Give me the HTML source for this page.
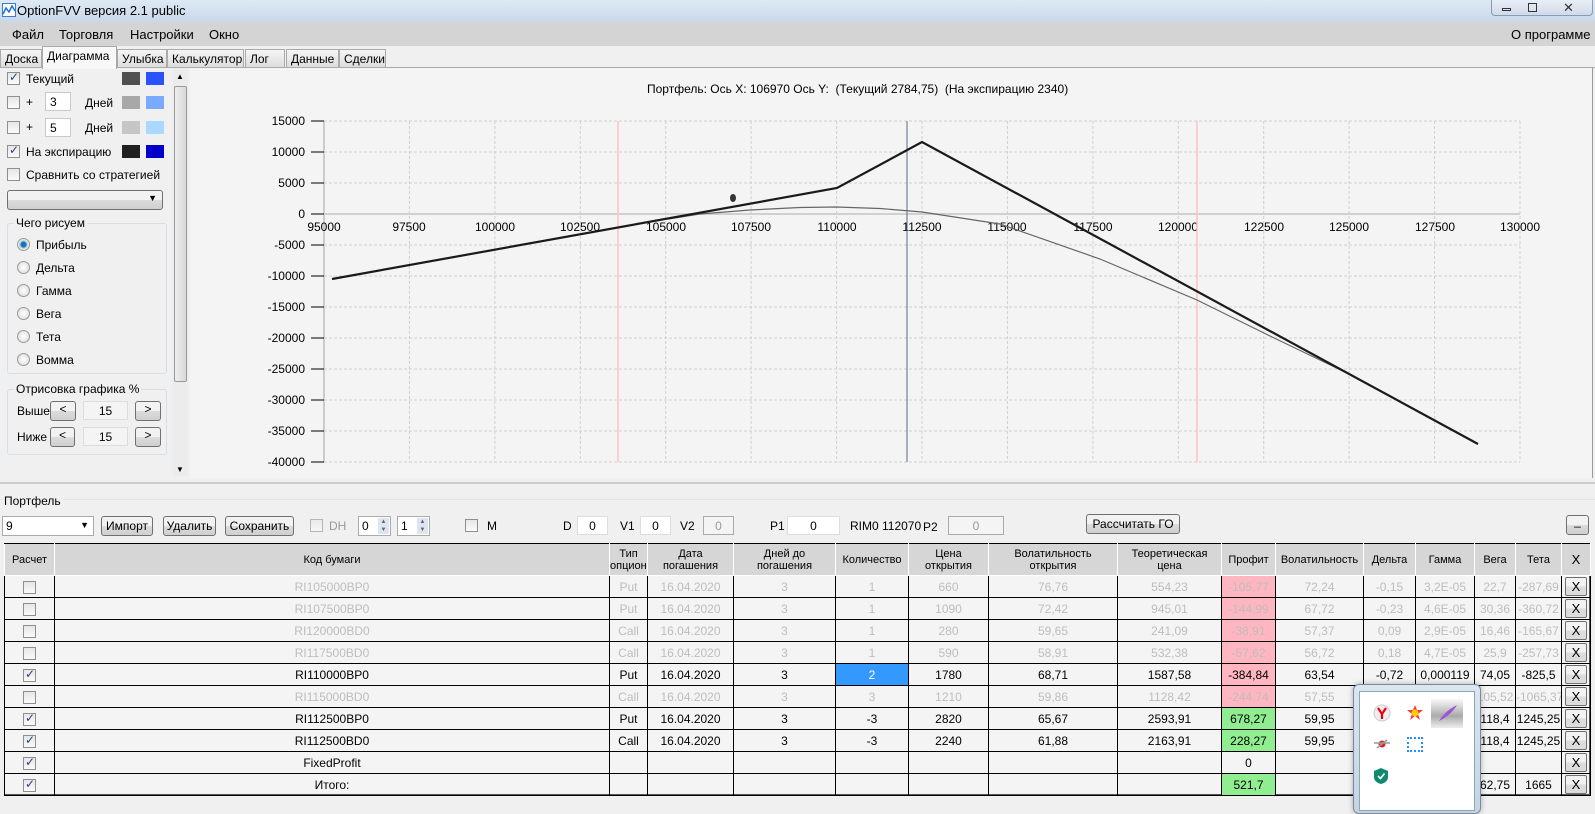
<!DOCTYPE html>
<html><head><meta charset="utf-8"><style>
*{box-sizing:border-box;margin:0;padding:0}
body{width:1595px;height:802px;overflow:hidden;background:#f0f0f0;font-family:"Liberation Sans",sans-serif;font-size:12px;color:#000;position:relative}
.a{position:absolute}
.cb{position:absolute;width:13px;height:13px;border:1px solid #8e8f8f;background:linear-gradient(#e6e6e6,#fafafa)}
.cb.on::after{content:"✓";position:absolute;left:1px;top:-3px;font-size:12px;color:#2a3f8a}
.rd{position:absolute;width:13px;height:13px;border-radius:50%;border:1px solid #9a9a9a;background:radial-gradient(#fff,#d8d8d8)}
.rd.on{background:radial-gradient(#1a6fc0 30%,#9cc 45%,#e8e8e8 60%)}
.btn{position:absolute;border:1px solid #707070;border-radius:3px;background:linear-gradient(#f2f2f2 50%,#dcdcdc 50%,#cfcfcf);text-align:center;font-size:12px}
.tb{position:absolute;border:1px solid #c8c8c8;background:#fff;text-align:center}
.tab{position:absolute;top:49px;height:19px;border:1px solid #aaa;border-bottom:none;background:linear-gradient(#f5f5f5,#dcdcdc);font-size:12px;padding:2px 4px}
table{position:absolute;left:4px;top:543px;width:1586px;border-collapse:collapse;table-layout:fixed;font-size:12px}
td{border:1px solid #000;height:22px;text-align:center;white-space:nowrap;overflow:hidden;padding:0}
th{background:#d6d6d6;border:1px solid #fff;border-top:1px solid #000;font-weight:normal;font-size:11px;height:32px;line-height:12px;padding:0;overflow:hidden;white-space:nowrap}
tr.g td{color:#bdbdbd}
.pk{background:#ffb6c1}.gr{background:#90ee90}
.x{display:inline-block;width:22px;height:19px;border:1px solid #707070;border-radius:2px;background:linear-gradient(#f2f2f2 50%,#dcdcdc 50%);font-size:13px;line-height:17px;vertical-align:middle}
.ycb{display:inline-block;width:13px;height:13px;border:1px solid #8e8f8f;background:linear-gradient(#e6e6e6,#fafafa);vertical-align:middle;position:relative}
.ycb.on::after{content:"✓";position:absolute;left:1px;top:-3px;font-size:12px;color:#2a3f8a}
</style></head><body>
<div class="a" style="left:0;top:0;width:1595px;height:22px;background:linear-gradient(#dfe9f5,#c9d8ea)"></div>
<svg class="a" style="left:2px;top:3px" width="14" height="14"><rect x=".5" y=".5" width="13" height="13" fill="#fff" stroke="#3a7bd5"/><path d="M1 11 L4 5 L7 9 L10 3 L13 8" stroke="#1e6fd9" fill="none" stroke-width="1.5"/></svg>
<div class="a" style="left:17px;top:3px;font-size:13px">OptionFVV версия 2.1 public</div>
<div class="a" style="left:1491px;top:0;width:102px;height:16px;border:1px solid #8a9bb5;border-top:none;border-radius:0 0 4px 4px;background:linear-gradient(#e8eef7,#d0dbe9)"></div>
<div class="a" style="left:1502px;top:8px;width:9px;height:3px;border:1px solid #333"></div>
<div class="a" style="left:1528px;top:3px;width:9px;height:9px;border:1px solid #333"></div>
<div class="a" style="left:1563px;top:0;font-size:13px;color:#333">✕</div>
<div class="a" style="left:0;top:22px;width:1595px;height:24px;background:#d4d4d4"></div>
<div class="a" style="left:12px;top:27px;font-size:13px">Файл</div>
<div class="a" style="left:59px;top:27px;font-size:13px">Торговля</div>
<div class="a" style="left:130px;top:27px;font-size:13px">Настройки</div>
<div class="a" style="left:209px;top:27px;font-size:13px">Окно</div>
<div class="a" style="left:1511px;top:27px;font-size:13px">О программе</div>
<div class="tab" style="left:0;width:42px">Доска</div>
<div class="tab" style="left:42px;top:46px;height:23px;width:75px;background:#f8f8f8;z-index:2">Диаграмма</div>
<div class="tab" style="left:117px;width:50px">Улыбка</div>
<div class="tab" style="left:167px;width:77px">Калькулятор</div>
<div class="tab" style="left:245px;width:40px">Лог</div>
<div class="tab" style="left:286px;width:53px">Данные</div>
<div class="tab" style="left:339px;width:47px">Сделки</div>
<div class="a" style="left:0;top:67px;width:1595px;height:1px;background:#aaa"></div>
<div class="cb on" style="left:7px;top:72px"></div><div class="a" style="left:26px;top:72px">Текущий</div>
<div class="a" style="left:122px;top:72px;width:18px;height:13px;background:#505050"></div><div class="a" style="left:146px;top:72px;width:18px;height:13px;background:#2a52ff"></div>
<div class="cb" style="left:7px;top:96px"></div><div class="a" style="left:26px;top:95px">+</div>
<div class="tb" style="left:45px;top:92px;width:26px;height:19px;text-align:left;padding:2px 4px">3</div><div class="a" style="left:85px;top:96px">Дней</div>
<div class="a" style="left:122px;top:96px;width:18px;height:13px;background:#a8a8a8"></div><div class="a" style="left:146px;top:96px;width:18px;height:13px;background:#7aaaff"></div>
<div class="cb" style="left:7px;top:121px"></div><div class="a" style="left:26px;top:120px">+</div>
<div class="tb" style="left:45px;top:118px;width:26px;height:19px;text-align:left;padding:2px 4px">5</div><div class="a" style="left:85px;top:121px">Дней</div>
<div class="a" style="left:122px;top:121px;width:18px;height:13px;background:#c6c6c6"></div><div class="a" style="left:146px;top:121px;width:18px;height:13px;background:#aad8ff"></div>
<div class="cb on" style="left:7px;top:145px"></div><div class="a" style="left:26px;top:145px">На экспирацию</div>
<div class="a" style="left:122px;top:145px;width:18px;height:13px;background:#202020"></div><div class="a" style="left:146px;top:145px;width:18px;height:13px;background:#0000c8"></div>
<div class="cb" style="left:7px;top:168px"></div><div class="a" style="left:26px;top:168px">Сравнить со стратегией</div>
<div class="btn" style="left:7px;top:190px;width:156px;height:20px"><span style="position:absolute;right:5px;top:2px;font-size:9px">▼</span></div>
<div class="a" style="left:7px;top:223px;width:160px;height:151px;border:1px solid #d5dfe5;border-radius:3px"></div>
<div class="a" style="left:14px;top:216px;background:#f0f0f0;padding:0 2px">Чего рисуем</div>
<div class="rd on" style="left:17px;top:238px"></div><div class="a" style="left:36px;top:238px">Прибыль</div>
<div class="rd" style="left:17px;top:261px"></div><div class="a" style="left:36px;top:261px">Дельта</div>
<div class="rd" style="left:17px;top:284px"></div><div class="a" style="left:36px;top:284px">Гамма</div>
<div class="rd" style="left:17px;top:307px"></div><div class="a" style="left:36px;top:307px">Вега</div>
<div class="rd" style="left:17px;top:330px"></div><div class="a" style="left:36px;top:330px">Тета</div>
<div class="rd" style="left:17px;top:353px"></div><div class="a" style="left:36px;top:353px">Вомма</div>
<div class="a" style="left:7px;top:389px;width:160px;height:66px;border:1px solid #d5dfe5;border-radius:3px"></div>
<div class="a" style="left:14px;top:382px;background:#f0f0f0;padding:0 2px">Отрисовка графика %</div>
<div class="a" style="left:17px;top:404px">Выше</div>
<div class="btn" style="left:50px;top:401px;width:26px;height:20px">&lt;</div>
<div class="tb" style="left:83px;top:401px;width:45px;height:19px;background:#f4f4f4;border-color:#ddd;padding-top:2px">15</div>
<div class="btn" style="left:135px;top:401px;width:26px;height:20px">&gt;</div>
<div class="a" style="left:17px;top:430px">Ниже</div>
<div class="btn" style="left:50px;top:427px;width:25px;height:20px">&lt;</div>
<div class="tb" style="left:83px;top:427px;width:45px;height:19px;background:#f4f4f4;border-color:#ddd;padding-top:2px">15</div>
<div class="btn" style="left:135px;top:427px;width:26px;height:20px">&gt;</div>
<div class="a" style="left:173px;top:68px;width:15px;height:408px;background:#ececec"></div>
<div class="a" style="left:176px;top:72px;font-size:8px">▲</div>
<div class="a" style="left:174px;top:86px;width:13px;height:296px;border:1px solid #999;border-radius:2px;background:linear-gradient(90deg,#eee,#d8d8d8)"></div>
<div class="a" style="left:176px;top:465px;font-size:8px">▼</div>
<div class="a" style="left:190px;top:68px;width:1403px;height:410px;background:#f4f4f4;border-right:1px solid #999"></div>
<div class="a" style="left:647px;top:82px;font-size:12px">Портфель: Ось X: 106970 Ось Y: &nbsp;(Текущий 2784,75) &nbsp;(На экспирацию 2340)</div>
<svg class="a" style="left:0;top:0" width="1595" height="480" font-family="Liberation Sans" font-size="12">
<g stroke="#cfcfcf" stroke-dasharray="3,2">
<line x1="324" y1="121" x2="1520" y2="121"/><line x1="324" y1="152" x2="1520" y2="152"/><line x1="324" y1="183" x2="1520" y2="183"/>
<line x1="324" y1="245" x2="1520" y2="245"/><line x1="324" y1="276" x2="1520" y2="276"/><line x1="324" y1="307" x2="1520" y2="307"/><line x1="324" y1="338" x2="1520" y2="338"/><line x1="324" y1="369" x2="1520" y2="369"/><line x1="324" y1="400" x2="1520" y2="400"/><line x1="324" y1="431" x2="1520" y2="431"/><line x1="324" y1="462" x2="1520" y2="462"/>
<line x1="409.4" y1="121" x2="409.4" y2="462"/><line x1="494.9" y1="121" x2="494.9" y2="462"/><line x1="580.3" y1="121" x2="580.3" y2="462"/><line x1="665.7" y1="121" x2="665.7" y2="462"/><line x1="751.1" y1="121" x2="751.1" y2="462"/><line x1="836.6" y1="121" x2="836.6" y2="462"/><line x1="922" y1="121" x2="922" y2="462"/><line x1="1007.4" y1="121" x2="1007.4" y2="462"/><line x1="1092.9" y1="121" x2="1092.9" y2="462"/><line x1="1178.3" y1="121" x2="1178.3" y2="462"/><line x1="1263.7" y1="121" x2="1263.7" y2="462"/><line x1="1349.1" y1="121" x2="1349.1" y2="462"/><line x1="1434.6" y1="121" x2="1434.6" y2="462"/><line x1="1520" y1="121" x2="1520" y2="462"/>
</g>
<line x1="324" y1="121" x2="324" y2="462" stroke="#ccc" stroke-width="2"/>
<line x1="324" y1="214" x2="1520" y2="214" stroke="#d0d0d0" stroke-width="2"/>
<g stroke="#000"><line x1="311" y1="121" x2="324" y2="121"/><line x1="311" y1="152" x2="324" y2="152"/><line x1="311" y1="183" x2="324" y2="183"/><line x1="311" y1="214" x2="324" y2="214"/><line x1="311" y1="245" x2="324" y2="245"/><line x1="311" y1="276" x2="324" y2="276"/><line x1="311" y1="307" x2="324" y2="307"/><line x1="311" y1="338" x2="324" y2="338"/><line x1="311" y1="369" x2="324" y2="369"/><line x1="311" y1="400" x2="324" y2="400"/><line x1="311" y1="431" x2="324" y2="431"/><line x1="311" y1="462" x2="324" y2="462"/></g>
<g text-anchor="end"><text x="305" y="125">15000</text><text x="305" y="156">10000</text><text x="305" y="187">5000</text><text x="305" y="218">0</text><text x="305" y="249">-5000</text><text x="305" y="280">-10000</text><text x="305" y="311">-15000</text><text x="305" y="342">-20000</text><text x="305" y="373">-25000</text><text x="305" y="404">-30000</text><text x="305" y="435">-35000</text><text x="305" y="466">-40000</text></g>
<g text-anchor="middle"><text x="324" y="231">95000</text><text x="409" y="231">97500</text><text x="495" y="231">100000</text><text x="580" y="231">102500</text><text x="666" y="231">105000</text><text x="751" y="231">107500</text><text x="837" y="231">110000</text><text x="922" y="231">112500</text><text x="1007" y="231">115000</text><text x="1093" y="231">117500</text><text x="1178" y="231">120000</text><text x="1264" y="231">122500</text><text x="1349" y="231">125000</text><text x="1435" y="231">127500</text><text x="1520" y="231">130000</text></g>
<line x1="618" y1="121" x2="618" y2="462" stroke="#ffc0c8" stroke-width="1.5"/>
<line x1="1197" y1="121" x2="1197" y2="462" stroke="#ffc0c8" stroke-width="1.5"/>
<line x1="907" y1="121" x2="907" y2="462" stroke="#5a6a80"/>
<polyline fill="none" stroke="#666" stroke-width="1.2" points="668,219 700,214 750,210 800,207.5 836,207 880,208.5 922,212 1000,224 1100,259 1197,300 1270,336 1349,374 1478,444"/>
<polyline fill="none" stroke="#1a1a1a" stroke-width="2.2" points="332,279 837,188 922,142 1478,444"/>
<ellipse cx="733" cy="198" rx="3" ry="4" fill="#333"/>
</svg>
<div class="a" style="left:0;top:482px;width:1595px;height:2px;background:#ccc"></div>
<div class="a" style="left:0;top:499px;width:1595px;height:1px;background:#dde4ea"></div>
<div class="a" style="left:4px;top:494px;background:#f0f0f0;padding-right:2px">Портфель</div>
<div class="tb" style="left:2px;top:516px;width:92px;height:20px;text-align:left;padding:2px 3px;border-color:#aaa">9<span style="position:absolute;right:4px;top:3px;font-size:9px">▼</span></div>
<div class="btn" style="left:101px;top:516px;width:52px;height:20px;padding-top:2px">Импорт</div>
<div class="btn" style="left:163px;top:516px;width:53px;height:20px;padding-top:2px">Удалить</div>
<div class="btn" style="left:225px;top:516px;width:69px;height:20px;padding-top:2px">Сохранить</div>
<div class="cb" style="left:310px;top:519px;opacity:.6"></div><div class="a" style="left:329px;top:519px;color:#999">DH</div>
<div class="tb" style="left:358px;top:516px;width:33px;height:20px;text-align:left;padding:2px 3px;border-color:#aaa">0</div><div class="a" style="left:378px;top:518px;width:11px;height:16px;background:#dfe5ee;font-size:6px;line-height:8px;text-align:center;color:#567">▲<br>▼</div>
<div class="tb" style="left:397px;top:516px;width:33px;height:20px;text-align:left;padding:2px 3px;border-color:#aaa">1</div><div class="a" style="left:417px;top:518px;width:11px;height:16px;background:#dfe5ee;font-size:6px;line-height:8px;text-align:center;color:#567">▲<br>▼</div>
<div class="cb" style="left:465px;top:519px"></div><div class="a" style="left:487px;top:519px">M</div>
<div class="a" style="left:563px;top:519px">D</div><div class="tb" style="left:577px;top:516px;width:31px;height:19px;padding-top:2px;border-color:#ddd">0</div>
<div class="a" style="left:620px;top:519px">V1</div><div class="tb" style="left:640px;top:516px;width:31px;height:19px;padding-top:2px;border-color:#ddd">0</div>
<div class="a" style="left:680px;top:519px">V2</div><div class="tb" style="left:703px;top:516px;width:31px;height:19px;padding-top:2px;color:#999;background:#f4f4f4;border-color:#aaa">0</div>
<div class="a" style="left:770px;top:519px">P1</div><div class="tb" style="left:787px;top:516px;width:53px;height:19px;padding-top:2px;border-color:#ddd">0</div>
<div class="a" style="left:850px;top:519px">RIM0 112070</div><div class="a" style="left:923px;top:520px">P2</div>
<div class="tb" style="left:948px;top:516px;width:56px;height:19px;padding-top:2px;color:#999;background:#f4f4f4;border-color:#aaa">0</div>
<div class="btn" style="left:1086px;top:514px;width:94px;height:20px;padding-top:2px">Рассчитать ГО</div>
<div class="btn" style="left:1566px;top:515px;width:23px;height:20px;line-height:10px">_</div>
<div class="a" style="left:4px;top:543px;width:1586px;height:252px;background:#f4f4f4;border:1px solid #555"></div>
<table>
<colgroup><col style="width:50px"><col style="width:555px"><col style="width:38px"><col style="width:86px"><col style="width:102px"><col style="width:73px"><col style="width:80px"><col style="width:129px"><col style="width:104px"><col style="width:54px"><col style="width:88px"><col style="width:52px"><col style="width:59px"><col style="width:41px"><col style="width:46px"><col style="width:29px"></colgroup>
<tr><th>Расчет</th><th>Код бумаги</th><th>Тип<br>опциона</th><th>Дата<br>погашения</th><th>Дней до<br>погашения</th><th>Количество</th><th>Цена<br>открытия</th><th>Волатильность<br>открытия</th><th>Теоретическая<br>цена</th><th>Профит</th><th>Волатильность</th><th>Дельта</th><th>Гамма</th><th>Вега</th><th>Тета</th><th style="font-size:13px">X</th></tr>
<tr class="g"><td><span class="ycb"></span></td><td>RI105000BP0</td><td>Put</td><td>16.04.2020</td><td>3</td><td>1</td><td>660</td><td>76,76</td><td>554,23</td><td class="pk">-105,77</td><td>72,24</td><td>-0,15</td><td>3,2E-05</td><td>22,7</td><td>-287,69</td><td><span class="x" style="color:#000">X</span></td></tr>
<tr class="g"><td><span class="ycb"></span></td><td>RI107500BP0</td><td>Put</td><td>16.04.2020</td><td>3</td><td>1</td><td>1090</td><td>72,42</td><td>945,01</td><td class="pk">-144,99</td><td>67,72</td><td>-0,23</td><td>4,6E-05</td><td>30,36</td><td>-360,72</td><td><span class="x" style="color:#000">X</span></td></tr>
<tr class="g"><td><span class="ycb"></span></td><td>RI120000BD0</td><td>Call</td><td>16.04.2020</td><td>3</td><td>1</td><td>280</td><td>59,65</td><td>241,09</td><td class="pk">-38,91</td><td>57,37</td><td>0,09</td><td>2,9E-05</td><td>16,46</td><td>-165,67</td><td><span class="x" style="color:#000">X</span></td></tr>
<tr class="g"><td><span class="ycb"></span></td><td>RI117500BD0</td><td>Call</td><td>16.04.2020</td><td>3</td><td>1</td><td>590</td><td>58,91</td><td>532,38</td><td class="pk">-57,62</td><td>56,72</td><td>0,18</td><td>4,7E-05</td><td>25,9</td><td>-257,73</td><td><span class="x" style="color:#000">X</span></td></tr>
<tr><td><span class="ycb on"></span></td><td>RI110000BP0</td><td>Put</td><td>16.04.2020</td><td>3</td><td style="background:#3399ff;color:#fff">2</td><td>1780</td><td>68,71</td><td>1587,58</td><td class="pk">-384,84</td><td>63,54</td><td>-0,72</td><td>0,000119</td><td>74,05</td><td>-825,5</td><td><span class="x">X</span></td></tr>
<tr class="g"><td><span class="ycb"></span></td><td>RI115000BD0</td><td>Call</td><td>16.04.2020</td><td>3</td><td>3</td><td>1210</td><td>59,86</td><td>1128,42</td><td class="pk">-244,74</td><td>57,55</td><td></td><td></td><td>105,52</td><td>-1065,37</td><td><span class="x" style="color:#000">X</span></td></tr>
<tr><td><span class="ycb on"></span></td><td>RI112500BP0</td><td>Put</td><td>16.04.2020</td><td>3</td><td>-3</td><td>2820</td><td>65,67</td><td>2593,91</td><td class="gr">678,27</td><td>59,95</td><td></td><td></td><td>118,4</td><td>1245,25</td><td><span class="x">X</span></td></tr>
<tr><td><span class="ycb on"></span></td><td>RI112500BD0</td><td>Call</td><td>16.04.2020</td><td>3</td><td>-3</td><td>2240</td><td>61,88</td><td>2163,91</td><td class="gr">228,27</td><td>59,95</td><td></td><td></td><td>118,4</td><td>1245,25</td><td><span class="x">X</span></td></tr>
<tr><td><span class="ycb on"></span></td><td>FixedProfit</td><td></td><td></td><td></td><td></td><td></td><td></td><td></td><td>0</td><td></td><td></td><td></td><td></td><td></td><td><span class="x">X</span></td></tr>
<tr><td><span class="ycb on"></span></td><td>Итого:</td><td></td><td></td><td></td><td></td><td></td><td></td><td></td><td class="gr">521,7</td><td></td><td></td><td></td><td>62,75</td><td>1665</td><td><span class="x">X</span></td></tr>
</table>
<div class="a" style="left:1353px;top:684px;width:128px;height:130px;border:1px solid #7a8a9a;border-radius:6px;background:linear-gradient(#dbe6f2,#c4d3e3);box-shadow:0 0 6px rgba(0,0,0,.3)"></div>
<div class="a" style="left:1359px;top:691px;width:116px;height:120px;background:#fff;border:1px solid #8aa"></div>
<div class="a" style="left:1431px;top:698px;width:32px;height:30px;background:linear-gradient(#fff,#aaa 60%,#eee)"></div>
<svg class="a" style="left:1373px;top:704px" width="18" height="18"><circle cx="9" cy="9" r="8" fill="#eee" stroke="#ccc"/><path d="M5 4 L9 10 L13 4 M9 10 V15" stroke="#e01" stroke-width="2.2" fill="none"/></svg>
<svg class="a" style="left:1406px;top:704px" width="18" height="18"><path d="M9 1 L11 6 L17 6 L12 10 L14 16 L9 12 L4 16 L6 10 L1 6 L7 6Z" fill="#f33"/><circle cx="9" cy="9" r="3.5" fill="#fc0"/></svg>
<svg class="a" style="left:1437px;top:703px" width="22" height="20"><path d="M2 18 Q8 8 20 2 Q14 12 2 18Z" fill="#9a55d8"/></svg>
<svg class="a" style="left:1373px;top:737px" width="18" height="14"><circle cx="9" cy="7" r="3.5" fill="#d22"/><path d="M1 6 H17 M4 11 L14 3" stroke="#999" stroke-width="1.5"/></svg>
<div class="a" style="left:1407px;top:737px;width:16px;height:15px;border:2px dotted #1e90ff"></div>
<svg class="a" style="left:1373px;top:767px" width="16" height="18"><path d="M8 1 L15 4 V10 Q15 15 8 17 Q1 15 1 10 V4Z" fill="#0f8a6f"/><path d="M5 9 L7.5 11.5 L11.5 6.5" stroke="#fff" stroke-width="1.6" fill="none"/></svg>
</body></html>
